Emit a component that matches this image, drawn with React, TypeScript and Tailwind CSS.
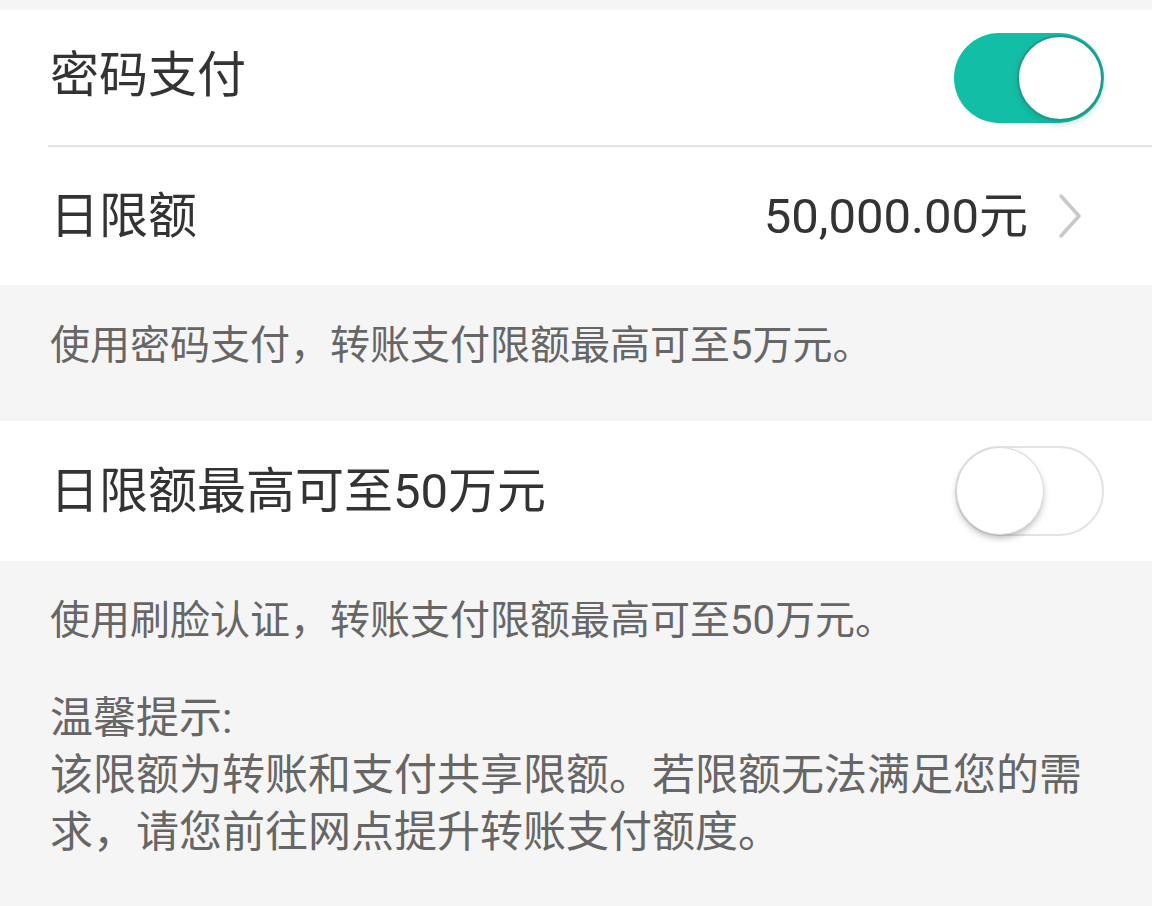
const font = "font-['Roboto','Noto_Sans_CJK_SC',sans-serif]";

const Toggle = ({ on }: { on: boolean }) => {
  if (on) {
    return (
      <div className="relative h-[90px] w-[150px] rounded-full bg-[#12bfa6]">
        <div className="absolute right-[1px] top-[2px] h-[86px] w-[86px] rounded-full border-2 border-[#1d9a89] bg-white shadow-[0_3px_6px_rgba(0,120,100,0.25)]" />
      </div>
    );
  }
  return (
    <div className="relative h-[90px] w-[149px] rounded-full border-2 border-[#e3e3e3] bg-white">
      <div className="absolute left-0 top-0 h-[86px] w-[86px] rounded-full bg-white shadow-[0_4px_7px_rgba(0,0,0,0.28)] ring-1 ring-[#dcdcdc]" />
    </div>
  );
};

const Chevron = () => (
  <svg width="28" height="46" viewBox="0 0 28 46" fill="none">
    <path
      d="M5 3 L23 23 L5 43"
      stroke="#c9c9c9"
      strokeWidth="3.5"
      strokeLinecap="round"
      strokeLinejoin="round"
    />
  </svg>
);

export default function App() {
  return (
    <div className={`min-h-[906px] w-full bg-[#f5f5f5] ${font}`}>
      <div className="h-[10px]" />

      <div className="bg-white">
        <div className="flex h-[135px] items-center justify-between pl-[50px] pr-[48px]">
          <span className="-mt-[4px] text-[49px] leading-none text-[#333333]">密码支付</span>
          <Toggle on />
        </div>
        <div className="ml-[48px] h-[2px] bg-[#e4e4e4]" />
        <div className="flex h-[138px] items-center justify-between pl-[50px] pr-[68px]">
          <span className="text-[49px] leading-none text-[#333333]">日限额</span>
          <div className="flex items-center gap-[28px]">
            <span className="text-[49px] leading-none text-[#333333]">50,000.00元</span>
            <Chevron />
          </div>
        </div>
      </div>

      <div className="flex h-[136px] items-center pb-[14px] pl-[50px]">
        <p className="text-[40px] leading-none text-[#666666]">
          使用密码支付，转账支付限额最高可至5万元。
        </p>
      </div>

      <div className="flex h-[140px] items-center justify-between bg-white pl-[50px] pr-[48px]">
        <span className="text-[49px] leading-none text-[#333333]">日限额最高可至50万元</span>
        <Toggle on={false} />
      </div>

      <div className="pl-[50px] pr-[60px] pt-[32px]">
        <p className="text-[40px] leading-[56px] text-[#666666]">
          使用刷脸认证，转账支付限额最高可至50万元。
        </p>
        <div className="mt-[41px] text-[43px] leading-[57px] text-[#666666]">
          <p>温馨提示:</p>
          <p>该限额为转账和支付共享限额。若限额无法满足您的需求，请您前往网点提升转账支付额度。</p>
        </div>
      </div>
    </div>
  );
}
